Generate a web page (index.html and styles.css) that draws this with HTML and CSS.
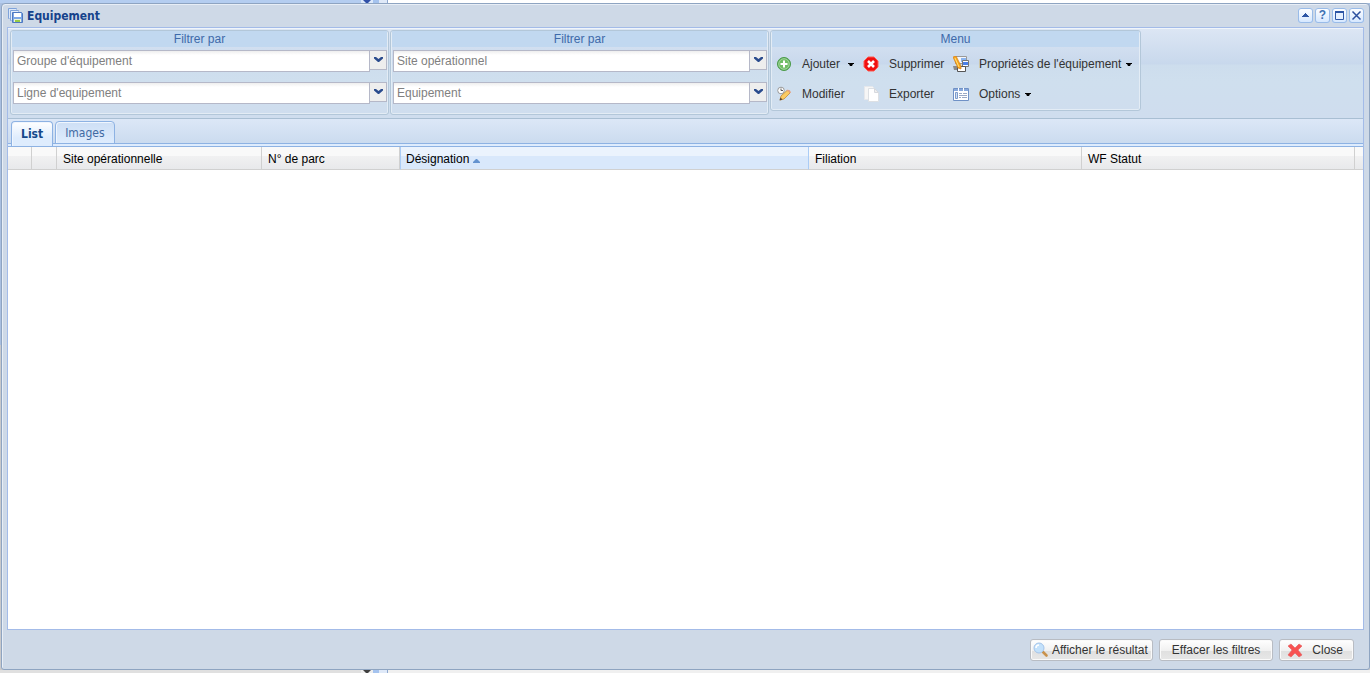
FILE: index.html
```html
<!DOCTYPE html>
<html lang="fr">
<head>
<meta charset="utf-8">
<title>Equipement</title>
<link rel="stylesheet" href="styles.css">
</head>
<body>
<div class="desk desk-top"><span class="desk-tree"></span><svg class="desk-arrow" viewBox="0 0 10 3"><path d="M1 0h8L6 3H4z" fill="#3050a8"/></svg><span class="desk-split"></span></div>
<main class="window">
  <header class="titlebar">
    <svg class="icon" viewBox="0 0 16 16"><path d="M1.500 10.500h-1V.5h8v1" fill="#dce8f8" stroke="#7fa3da"/><path d="M3.500 12.500h-1v-10h8v1" fill="#e4eefb" stroke="#7fa3da"/><path d="M4.500 4.500h9l1 1v9h-10z" fill="#7fa8e6" stroke="#4f79c0"/><path d="M6 5h7v4H6z" fill="#fff"/><path d="M6 11h7v3H6z" fill="#eef6d8"/><path d="M7 12h5v2H7z" fill="#98cb48"/></svg>
    <h1>Equipement</h1>
    <div class="tools">
      <button class="tool" aria-label="Réduire"><svg viewBox="0 0 15 15"><path d="M7 5h1v1h1v1h1v1h1v1H4V8h1V7h1V6h1z" fill="#2c55a5"/></svg></button>
      <button class="tool help" aria-label="Aide">?</button>
      <button class="tool" aria-label="Agrandir"><svg viewBox="0 0 15 15"><path d="M3.500 4v7.500h8V4" fill="#e5f0ff" stroke="#2c55a5"/><path d="M3 3h9v2H3z" fill="#2c55a5"/></svg></button>
      <button class="tool" aria-label="Fermer"><svg viewBox="0 0 15 15"><path d="M3.500 3.500l8 8M11.500 3.500l-8 8" stroke="#2c4f9e" stroke-width="1.500"/></svg></button>
    </div>
  </header>
  <section class="panel">
    <div class="ribbon">
      <fieldset class="group filters">
        <h2>Filtrer par</h2>
        <div class="combo"><input type="text" aria-label="Groupe d'équipement" placeholder="Groupe d'équipement"><button aria-label="Choisir le groupe"><svg viewBox="0 0 9 6"><path d="M0 0h2l2.500 2L7 0h2v1.500L5 5H4L0 1.500z" fill="#2a4b8d"/></svg></button></div>
        <div class="combo"><input type="text" aria-label="Ligne d'equipement" placeholder="Ligne d'equipement"><button aria-label="Choisir la ligne"><svg viewBox="0 0 9 6"><path d="M0 0h2l2.500 2L7 0h2v1.500L5 5H4L0 1.500z" fill="#2a4b8d"/></svg></button></div>
      </fieldset>
      <fieldset class="group filters">
        <h2>Filtrer par</h2>
        <div class="combo"><input type="text" aria-label="Site opérationnel" placeholder="Site opérationnel"><button aria-label="Choisir le site"><svg viewBox="0 0 9 6"><path d="M0 0h2l2.500 2L7 0h2v1.500L5 5H4L0 1.500z" fill="#2a4b8d"/></svg></button></div>
        <div class="combo"><input type="text" aria-label="Equipement" placeholder="Equipement"><button aria-label="Choisir l'équipement"><svg viewBox="0 0 9 6"><path d="M0 0h2l2.500 2L7 0h2v1.500L5 5H4L0 1.500z" fill="#2a4b8d"/></svg></button></div>
      </fieldset>
      <div class="group menu">
        <h2>Menu</h2>
        <div class="actions">
          <button class="action"><svg class="icon" viewBox="0 0 16 16"><circle cx="8" cy="8" r="6.500" fill="#58ad55" stroke="#4a9a48"/><circle cx="8" cy="8" r="5.300" fill="#70bd66" stroke="#b4deb0" stroke-width=".8"/><path d="M7 4.500h2V7h2.500v2H9v2.500H7V9H4.500V7H7z" fill="#fff"/></svg><span>Ajouter</span><svg class="caret wide" viewBox="0 0 6 3"><path d="M0 0h6v1H5L4 3H2L1 1H0z"/></svg></button>
          <button class="action"><svg class="icon" viewBox="0 0 16 16"><path d="M5 1h6l4 4v6l-4 4H5l-4-4V5z" fill="#f01010" stroke="#ff5a50"/><path d="M5 5l6 6M11 5l-6 6" stroke="#fff" stroke-width="2.600"/></svg><span>Supprimer</span></button>
          <button class="action"><svg class="icon" viewBox="0 0 16 16"><path d="M2.500.5h11v7h-11z" fill="#f4f6fa" stroke="#999"/><path d="M8 2h5v4H8z" fill="#8ab4f0"/><path d="M9.500 4.500h6v6h-6z" fill="#fff" stroke="#777"/><path d="M10 6h5v3h-5z" fill="#4a80e8"/><path d="M4.500 10.500h8v5h-8z" fill="#fff" stroke="#555"/><path d="M0 10h4v4H1z" fill="#8a8a8a"/><path d="M0 1l3-1 5 10v3l-3-1z" fill="#f8a51c" stroke="#d98015" stroke-width=".7"/><path d="M2 2l4 9" stroke="#ffe27a"/></svg><span>Propriétés de l'équipement</span><svg class="caret" viewBox="0 0 6 3"><path d="M0 0h6v1H5L4 3H2L1 1H0z"/></svg></button>
          <button class="action"><svg class="icon" viewBox="0 0 16 16"><circle cx="5" cy="4.500" r="3.300" fill="#fff" stroke="#999"/><path d="M5 2.500v2h2" fill="none" stroke="#555"/><path d="M4 14l1-4 6-5.500q3-.5 3 2.500l-6 6z" fill="#fbcb62" stroke="#c58a35" stroke-width=".8"/><path d="M11 4.500q3-.5 3 2.500" fill="none" stroke="#e8a080" stroke-width="1.500"/><path d="M3.500 14.500l1-3 2 2z" fill="#5a4630"/></svg><span>Modifier</span></button>
          <button class="action"><svg class="icon" viewBox="0 0 16 16"><path d="M1.500.5h8l2 2v11h-10z" fill="#f6f6f6" stroke="#e6e8ec"/><path d="M5.500 2.500h6l4 4v9h-10z" fill="#fff" stroke="#dde0e4"/><path d="M11.500 2.500v4h4z" fill="#eee" stroke="#d6d9de"/></svg><span>Exporter</span></button>
          <button class="action"><svg class="icon" viewBox="0 0 16 16"><path d="M.5 2.500h15v12H.5z" fill="#fff" stroke="#6f91c6"/><path d="M1 3h14v2H1z" fill="#88a9dc"/><path d="M5.500 2v3M10.500 2v3" stroke="#fff"/><path d="M2.500 6.500h2v6h-2z" fill="#cfdef5" stroke="#7d9ccb"/><path d="M6 7.500h3M10 7.500h4M6 9.500h8M6 11.500h2M9 11.500h5" stroke="#9aa9c5"/></svg><span>Options</span><svg class="caret" viewBox="0 0 6 3"><path d="M0 0h6v1H5L4 3H2L1 1H0z"/></svg></button>
        </div>
      </div>
    </div>
    <div class="content">
      <div class="tabs" role="tablist">
        <button class="tab active" role="tab" aria-selected="true">List</button>
        <button class="tab" role="tab" aria-selected="false">Images</button>
      </div>
      <div class="grid">
        <table>
          <colgroup><col class="c-mark"><col class="c-state"><col class="c-site"><col class="c-parc"><col><col class="c-wide"><col class="c-wide"><col class="c-end"></colgroup>
          <thead><tr><th></th><th></th><th>Site opérationnelle</th><th>N° de parc</th><th class="sorted">Désignation<svg class="sort" viewBox="0 0 7 4"><path d="M3 0h1l3 3v1H0V3z" fill="#6593cf"/></svg></th><th>Filiation</th><th>WF Statut</th><th></th></tr></thead>
        </table>
      </div>
    </div>
  </section>
  <footer class="footer">
    <button class="btn"><svg class="icon" viewBox="0 0 16 16"><path d="M10 10l3.500 3.500" stroke="#c9924c" stroke-width="2.600" stroke-linecap="round"/><circle cx="6" cy="6" r="5" fill="#c3e1fb" stroke="#a4c4ea"/><path d="M3 6a3 3 0 0 1 3-3" fill="none" stroke="#fff" stroke-width="1.500"/></svg><span>Afficher le résultat</span></button>
    <button class="btn plain"><span>Effacer les filtres</span></button>
    <button class="btn close"><svg class="icon" viewBox="0 0 16 16"><path d="M4 2l4 4 4-4 3 2-4 4 4 5-3 2-4-4-4 4-3-2 4-5-4-4z" fill="#f85252" stroke="#e06060" stroke-width=".6"/></svg><span>Close</span></button>
  </footer>
</main>
<div class="desk desk-bottom"><span class="desk-tree"></span><svg class="desk-arrow" viewBox="0 0 10 3"><path d="M1 0h8L6 3H4z" fill="#404040"/></svg><span class="desk-split"></span></div>
</body>
</html>
```
FILE: styles.css
```css
* { box-sizing: border-box; }
body {
  margin: 0;
  height: 100vh;
  display: flex;
  flex-direction: column;
  font: 12px/16px "Liberation Sans", Arial, sans-serif;
  color: #333;
  background: linear-gradient(#a9bfe0 0 345px, #c9c9cb 345px);
}
button, input { font: inherit; color: inherit; }
button { border: 0; padding: 0; background: none; }
svg { display: block; flex: none; }
.icon { width: 16px; height: 16px; }

.desk { display: flex; flex: none; height: 3px; background: #fff; }
.desk-tree { width: 361px; background: #b4cdf0; }
.desk-arrow { width: 12px; height: 3px; background: #dce9fb; }
.desk-split { width: 15px; background: #dfe9f8; border-left: 6px solid #a5c3ee; border-right: 1px solid #8fa9d0; }
.desk-bottom { background: #f0f0f0; }
.desk-bottom .desk-tree { background: #e0e0e0; }
.desk-bottom .desk-arrow { background: #eee; }

.window {
  flex: 1;
  min-height: 0;
  margin: 0 0 0 1px;
  display: flex;
  flex-direction: column;
  padding: 0 5px;
  border: 1px solid #8ea4c1;
  border-radius: 4px 4px 3px 3px;
  background: #ced9e7;
  box-shadow: inset 1px 1px #e8eef6;
}
.titlebar { display: flex; align-items: center; flex: none; height: 23px; padding: 0 0 0 1px; }
h1 { margin: 0 auto 0 3px; font: bold 12px/16px "DejaVu Sans Condensed", Tahoma, sans-serif; color: #15428b; }
.tools { display: flex; gap: 2px; }
.tool {
  width: 15px;
  height: 15px;
  border-radius: 3px;
  background: linear-gradient(#fff, #d3e6ff);
  box-shadow: inset 0 0 0 1px #99bbe8;
}
.help { font-weight: bold; line-height: 15px; color: #4072b4; }

.panel { flex: 1; min-height: 0; display: flex; flex-direction: column; border: 1px solid #a3bbe8; }
.ribbon {
  display: flex;
  align-items: flex-start;
  gap: 1px;
  flex: none;
  height: 91px;
  padding: 1px 2px;
  border-top: 1px solid #f0f5fb;
  border-bottom: 1px solid #a9bfd3;
  background: linear-gradient(#dce6f4, #c8d8ec 35px, #cddded 36px, #cfdfee 52px, #cfddee);
}
.group { margin: 0; padding: 0 1px 1px; border: 1px solid #b3c7d9; border-radius: 3px; box-shadow: inset 0 0 0 1px #e3ecf5; }
h2 { margin: 0; font: 12px/16px "Liberation Sans", Arial, sans-serif; color: #3e6aaa; text-align: center; background: #c1d8f0; }
.filters { width: 379px; height: 85px; display: flex; flex-direction: column; }
.filters h2 { margin-bottom: 3px; }
.combo { display: flex; align-items: flex-start; margin: 0 0 10px 1px; }
.combo input {
  flex: 1;
  min-width: 0;
  height: 22px;
  padding: 1px 3px;
  border: 1px solid #b5b8c8;
  background: linear-gradient(#eee, #fff 4px);
  outline: 0;
}
.combo input::placeholder { color: #808080; opacity: 1; }
.combo button { display: grid; place-items: center; width: 17px; height: 20px; border: 1px solid #b5b8c8; border-left: 0; background: #eee; }
.combo button svg { width: 9px; height: 6px; }
.menu { width: 371px; height: 81px; }
.actions { display: grid; grid-template-columns: 87px 90px 1fr; grid-auto-rows: 30px; padding: 2px 0 0 4px; }
.action { display: flex; align-items: center; white-space: nowrap; }
.action .icon { margin-right: 10px; }
.caret { width: 6px; height: 3px; margin-left: 5px; }
.wide { margin-left: 8px; }

.content { flex: 1; min-height: 0; display: flex; flex-direction: column; }
.tabs { display: flex; align-items: flex-end; gap: 2px; flex: none; height: 28px; padding: 0 3px; border-bottom: 1px solid #8db2e3; background: linear-gradient(#dce7f7, #cbdbef 24px, #8db2e3 24px 25px, #deecfd 25px); }
.tab {
  height: 23px;
  margin-bottom: 2px;
  padding: 0 9px;
  border: 1px solid #8db2e3;
  border-radius: 4px 4px 0 0;
  font: 12px/20px "DejaVu Sans Condensed", Tahoma, sans-serif;
  color: #416aa3;
  background: linear-gradient(#cedff5, #deecfd);
  box-shadow: inset 1px 1px #f0f6fe;
}
.active { height: 25px; margin-bottom: 0; border-bottom: 0; font-weight: bold; color: #15498b; background: linear-gradient(#fff, #deecfd 16px); }
.grid { flex: 1; min-height: 0; overflow: auto; background: #fff; }
table { width: 100%; table-layout: fixed; border-collapse: separate; border-spacing: 0; }
.c-mark { width: 24px; }
.c-state { width: 25px; }
.c-site { width: 205px; }
.c-parc { width: 138px; }
.c-wide { width: 273px; }
.c-end { width: 8px; }
th { height: 23px; padding: 1px 6px 0; font-weight: normal; text-align: left; color: #000; white-space: nowrap; border-right: 1px solid #d0d0d0; border-bottom: 1px solid #d0d0d0; background: linear-gradient(#f9f9f9 9px, #f1f1f2 9px, #e8e9eb); }
th:last-child { border-right: 0; padding: 0; }
.sorted { border-right-color: #aaccf6; border-left: 1px solid #aaccf6; padding-left: 5px; background: linear-gradient(#ebf3fd 9px, #d9e8fb 9px); }
.sort { display: inline-block; width: 7px; height: 4px; margin-left: 4px; vertical-align: 0; }

.footer { flex: none; display: flex; justify-content: flex-end; gap: 6px; padding: 9px 10px 8px; }
.btn {
  display: flex;
  align-items: center;
  gap: 3px;
  height: 22px;
  padding: 0 4px 0 2px;
  border: 1px solid #b8bcc3;
  border-radius: 3px;
  background: linear-gradient(#fff, #f0f0f0 11px, #e0e0e0 11px, #e7e7e7);
  box-shadow: inset 0 0 0 1px #fafafa;
}
.plain { padding: 0 12px; }
.close { gap: 9px; padding: 0 10px 0 7px; }
```
